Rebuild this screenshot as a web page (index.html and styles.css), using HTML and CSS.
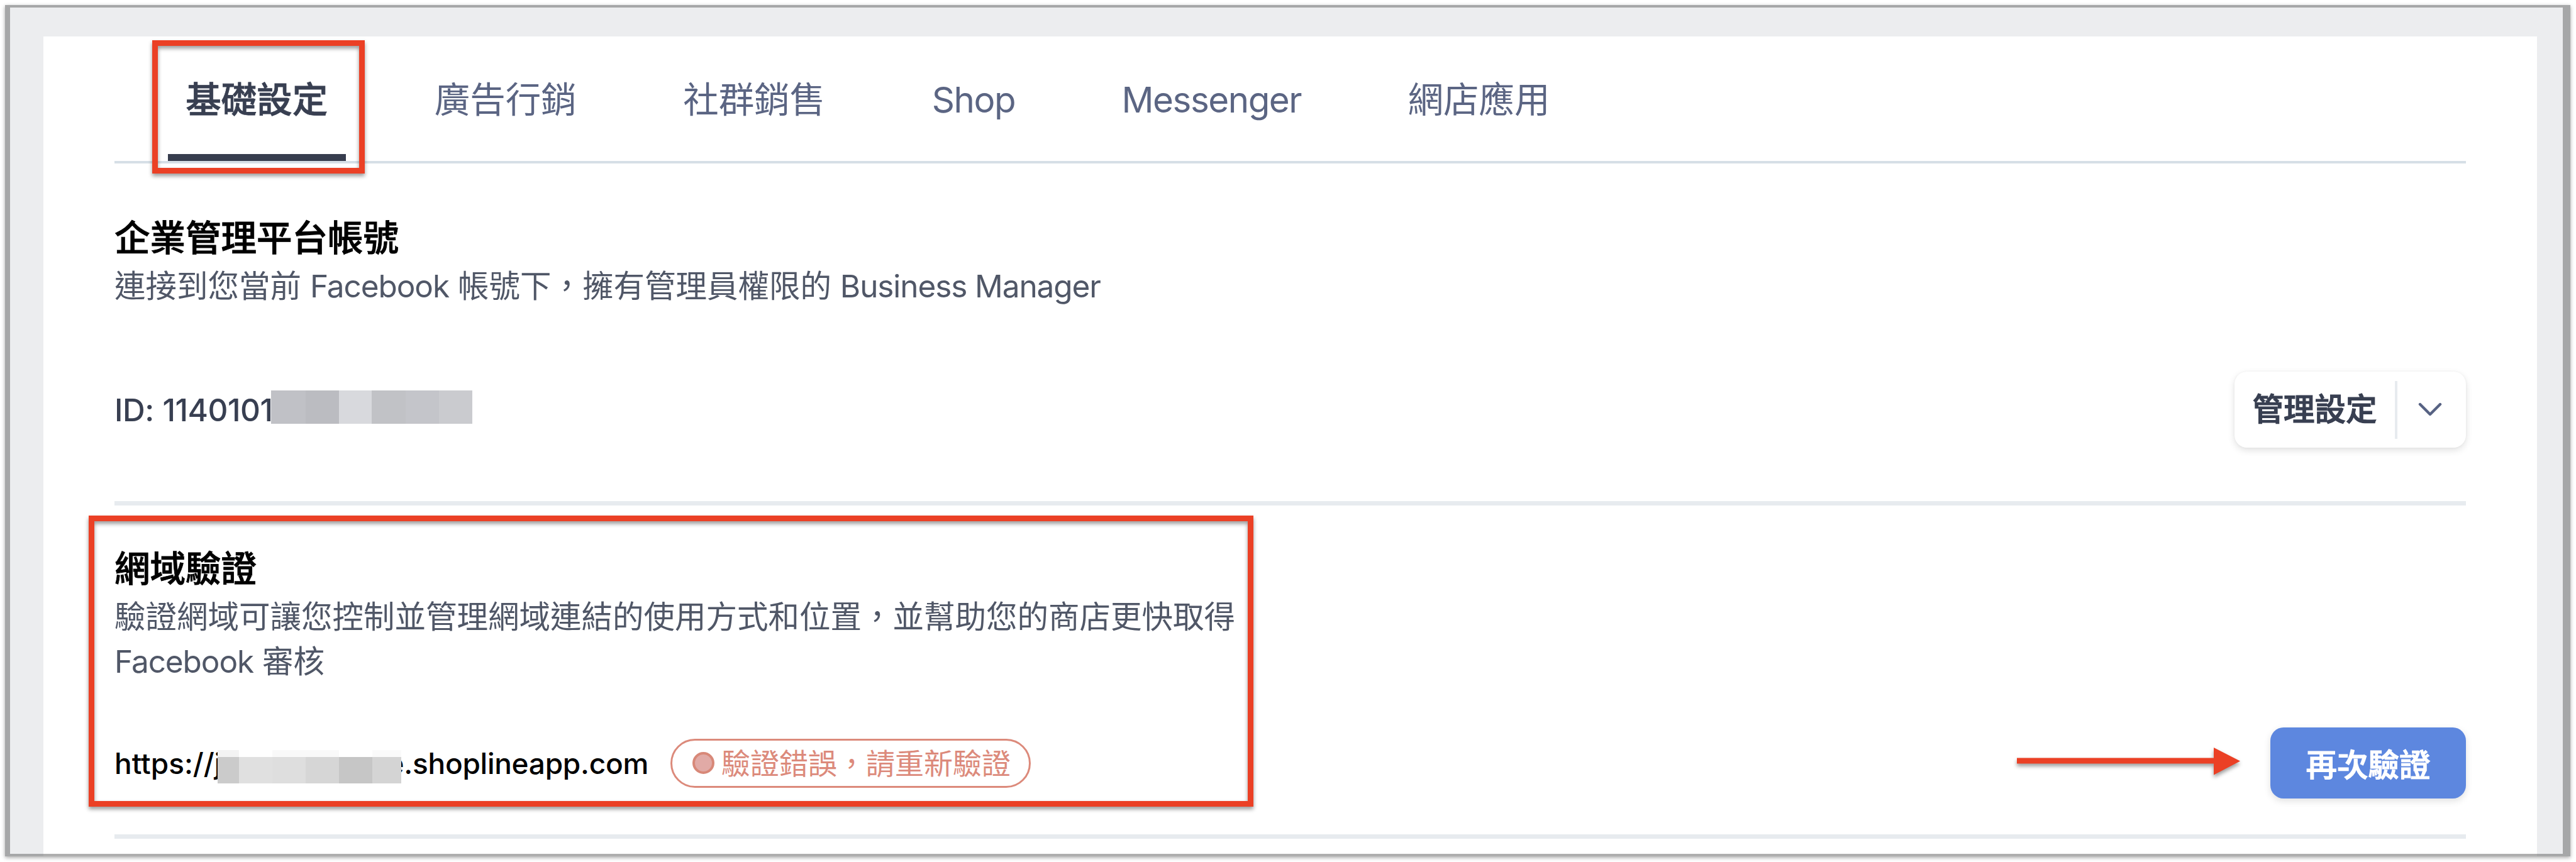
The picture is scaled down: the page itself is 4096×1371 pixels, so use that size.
FILE: index.html
```
<!DOCTYPE html>
<html lang="zh-Hant">
<head>
  <meta charset="UTF-8" />
  <meta name="viewport" content="width=device-width, initial-scale=1.0"/>
  <title>基礎設定</title>
  <link rel="stylesheet" href="styles.css">
</head>
<body>

  <div class="page">
    <main class="panel">
      <nav class="tabs">
        <a class="tab active">基礎設定</a>
        <a class="tab">廣告行銷</a>
        <a class="tab">社群銷售</a>
        <a class="tab latin">Shop</a>
        <a class="tab latin">Messenger</a>
        <a class="tab">網店應用</a>
      </nav>

      <section class="section account">
        <h2>企業管理平台帳號</h2>
        <p class="desc">連接到您當前 <span class="latin">Facebook</span> 帳號下，擁有管理員權限的 <span class="latin">Business Manager</span></p>
        <div class="row">
          <div class="account-id">ID: 1140101
            <span class="mask mask-id"><i></i><i></i><i></i><i></i><i></i><i></i></span>
          </div>
          <div class="split-button">
            <button class="split-label">管理設定</button>
            <span class="split-toggle">
              <svg width="38" height="24" viewBox="0 0 38 24"><path d="M3 3L19 19L35 3" fill="none" stroke="#576283" stroke-width="4.4" stroke-linecap="round" stroke-linejoin="round"/></svg>
            </span>
          </div>
        </div>
      </section>

      <section class="section domain">
        <h2>網域驗證</h2>
        <p class="desc">驗證網域可讓您控制並管理網域連結的使用方式和位置，並幫助您的商店更快取得<br><span class="latin">Facebook</span> 審核</p>
        <div class="row">
          <div class="domain-url">
            <span class="url-start">https://j</span>
            <span class="url-end">e.shoplineapp.com</span>
            <span class="mask mask-url"><i></i><i></i><i></i><i></i><i></i><i></i></span>
          </div>
          <div class="badge"><span class="dot"></span>驗證錯誤，請重新驗證</div>
          <button class="primary">再次驗證</button>
        </div>
      </section>
    </main>
  </div>

  <!-- annotations on top of the page -->
  <div class="highlight highlight-tab"></div>
  <div class="highlight highlight-domain"></div>
  <svg class="arrow" width="356" height="44" viewBox="0 0 356 44"><path d="M0 16.5H313V0L355 21.5L313 43.5V25.5H0Z" fill="#eb4025"/></svg>

</body>
</html>
```
FILE: styles.css
```
* {
  box-sizing: border-box;
}

body {
  margin: 0;
  width: 4096px;
  height: 1371px;
  overflow: hidden;
  position: relative;
  background: #fff;
  font-family: Inter, "Noto Sans CJK TC", sans-serif;
  color: #383f51;
}

h2, p {
  margin: 0;
}

button {
  border: none;
  padding: 0;
  background: none;
  font-family: inherit;
  color: inherit;
}

/* grey page with the outer frame */
.page {
  position: relative;
  width: 4079px;
  height: 1354px;
  margin: 8px 0 0 8px;
  padding: 50px 53px 0 61px;
  display: flex;
  background: #ecedef;
  box-shadow: 0 2px 6px rgba(0, 0, 0, 0.35);
}

.page::after {
  content: "";
  position: absolute;
  inset: 0;
  border: solid rgba(120, 120, 120, 0.6);
  border-width: 4px 12px 4px 8px;
}

.panel {
  flex: 1;
  background: #fff;
  padding: 0 113px;
}

.latin {
  letter-spacing: -0.022em;
}

/* tabs */
.tabs {
  display: flex;
  gap: 113px;
  height: 202px;
  padding-left: 85px;
  border-bottom: 4px solid #d6dfe6;
}

.tab {
  height: 198px;
  padding: 2px 28.25px 0;
  font-size: 56.5px;
  line-height: 198px;
  color: #5b6583;
  white-space: nowrap;
}

.tab.latin {
  letter-spacing: -0.026em;
}

.tab.active {
  color: #383f51;
  font-weight: 500;
  -webkit-text-stroke: 0.8px;
  border-bottom: 11px solid #373d4e;
}

/* sections */
.section {
  border-bottom: 7px solid #e7ebef;
}

.account {
  padding: 79px 0 85px;
}

.domain {
  padding: 61px 0 57px;
}

.section h2 {
  font-size: 56.5px;
  line-height: 80px;
  font-weight: 500;
  -webkit-text-stroke: 0.9px;
  color: #000;
}

.desc {
  margin-top: 1px;
  font-size: 49.5px;
  line-height: 71px;
  color: #505767;
}

.row {
  display: flex;
  align-items: center;
}

.account .row {
  justify-content: space-between;
  height: 121px;
  margin-top: 100px;
}

.domain .row {
  height: 113px;
  margin-top: 69px;
}

.account-id {
  position: relative;
  font-size: 49.5px;
  font-weight: 500;
  letter-spacing: -0.01em;
  word-spacing: 1px;
}

.domain-url {
  position: relative;
  display: flex;
  justify-content: space-between;
  width: 849px;
  font-size: 46px;
  font-weight: 500;
  color: #000;
}

.url-end {
  letter-spacing: -0.006em;
}

/* mosaic over private digits */
.mask {
  position: absolute;
  display: grid;
}

.mask-id {
  left: 249px;
  top: -1px;
  width: 320px;
  height: 53px;
  grid-template-columns: 55px 53px 52px 54px 53px 53px;
}

.mask-id i:nth-child(1) { background: #c0c1c6; }
.mask-id i:nth-child(2) { background: #bbbcc1; }
.mask-id i:nth-child(3) { background: #d8d9dd; }
.mask-id i:nth-child(4) { background: #c1c2c6; }
.mask-id i:nth-child(5) { background: #c4c5ca; }
.mask-id i:nth-child(6) { background: #cacbcf; }

.mask-url {
  left: 164px;
  top: 7px;
  width: 292px;
  height: 53px;
  grid-template-columns: 34px 53px 53px 53px 53px 46px;
}

.mask-url i { border-top: 11px solid #fff; }
.mask-url i:nth-child(1) { background: #cbcbcb; border-color: #f3f3f3; }
.mask-url i:nth-child(2) { background: #e0e0e0; }
.mask-url i:nth-child(3) { background: #dedede; border-color: #f9f9f9; }
.mask-url i:nth-child(4) { background: #d6d6d6; border-color: #f9f9f9; }
.mask-url i:nth-child(5) { background: #c6c6c6; }
.mask-url i:nth-child(6) { background: #d4d4d4; border-color: #fafafa; }

/* buttons */
.split-button {
  display: flex;
  align-items: center;
  width: 368px;
  height: 121px;
  border-radius: 20px;
  background: #fff;
  box-shadow: 0 4px 12px rgba(0, 0, 0, 0.12), 0 0 4px rgba(0, 0, 0, 0.04);
}

.split-label {
  width: 255px;
  padding-bottom: 9px;
  font-size: 49.5px;
  font-weight: 500;
  -webkit-text-stroke: 1.2px;
}

.split-toggle {
  flex: 1;
  height: 92px;
  padding-right: 5px;
  display: flex;
  align-items: center;
  justify-content: center;
  border-left: 4px solid #e7ebef;
}

.primary {
  width: 311px;
  height: 113px;
  margin-left: auto;
  border-radius: 21px;
  background: #5d87df;
  color: #fff;
  font-size: 49.5px;
  font-weight: 500;
  -webkit-text-stroke: 1.2px;
  box-shadow: 0 4px 12px rgba(0, 0, 0, 0.12);
}

/* error badge */
.badge {
  display: flex;
  align-items: center;
  width: 573px;
  height: 78px;
  margin-left: 35px;
  padding-left: 32px;
  border: 3.5px solid #dc8a7b;
  border-radius: 39px;
  font-size: 46px;
  line-height: 70px;
  color: #dc8a7b;
  white-space: nowrap;
}

.dot {
  width: 35px;
  height: 35px;
  margin-right: 11px;
  border: 4px solid #d88878;
  border-radius: 50%;
  background: #e1aaa6;
}

/* annotations */
.highlight {
  position: absolute;
  border: 9px solid #eb4025;
  filter: drop-shadow(0 4px 3px rgba(0, 0, 0, 0.4));
}

.highlight-tab {
  left: 242px;
  top: 64px;
  width: 338px;
  height: 212px;
}

.highlight-domain {
  left: 141px;
  top: 820px;
  width: 1852px;
  height: 463px;
}

.arrow {
  position: absolute;
  left: 3207px;
  top: 1189px;
  overflow: visible;
  filter: drop-shadow(0 4px 3px rgba(0, 0, 0, 0.4));
}
```
